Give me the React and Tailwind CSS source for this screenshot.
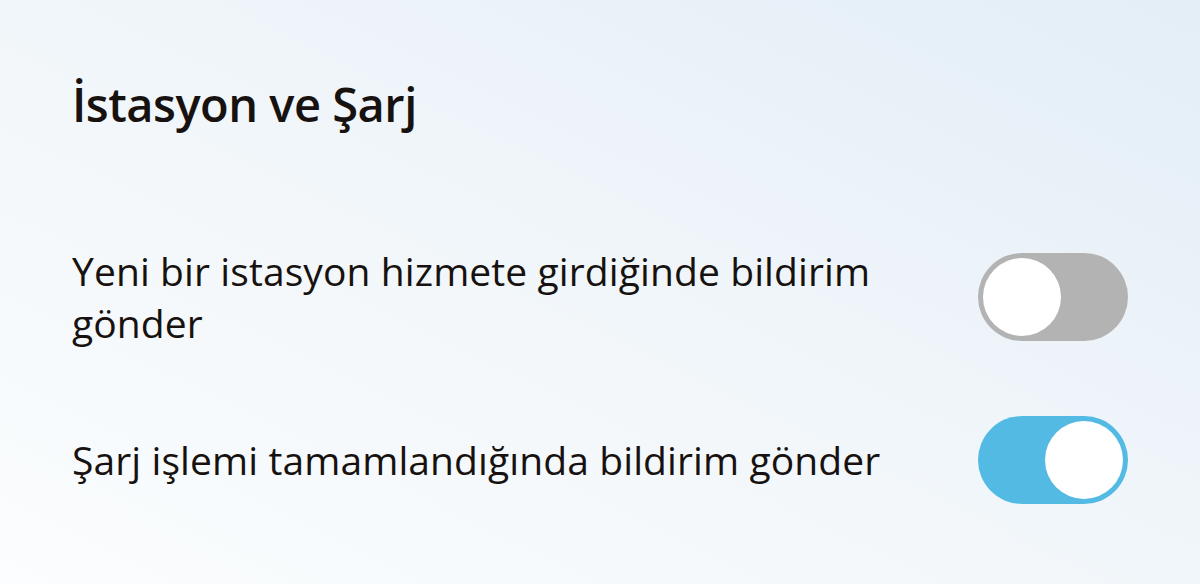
import { useState } from 'react';

// Bildirim ayarları: istasyon ve şarj bölümü
const rows = [
  { id: 'yeni-istasyon', label: 'Yeni bir istasyon hizmete girdiğinde bildirim gönder', on: false },
  { id: 'sarj-tamam', label: 'Şarj işlemi tamamlandığında bildirim gönder', on: true },
];

export default function App() {
  const [state, setState] = useState(() => Object.fromEntries(rows.map((r) => [r.id, r.on])));

  return (
    <div
      className="h-[584px] w-[1200px] overflow-hidden bg-gradient-to-tr from-[#fbfdfe] via-[#f1f6fa] to-[#e3eef7] text-[#17120f]"
      style={{ fontFamily: '"Open Sans", "Noto Sans", sans-serif' }}
    >
      <div className="pl-[72px] pr-[72px]">
        <h2 className="pt-[72px] text-[47px] font-semibold leading-[64px] tracking-[-0.5px]">İstasyon ve Şarj</h2>

        <div className="mt-[109px] flex flex-col gap-[67px]">
          {rows.map((r) => (
            <SettingRow
              key={r.id}
              label={r.label}
              checked={state[r.id]}
              onToggle={() => setState((s) => ({ ...s, [r.id]: !s[r.id] }))}
            />
          ))}
        </div>
      </div>
    </div>
  );
}

function SettingRow({ label, checked, onToggle }) {
  return (
    <div className="flex items-center justify-between gap-10">
      <p className="max-w-[860px] text-[39px] leading-[52px] tracking-[0.1px]">{label}</p>
      <Toggle checked={checked} onToggle={onToggle} />
    </div>
  );
}

function Toggle({ checked, onToggle }) {
  return (
    <button
      onClick={onToggle}
      className={`flex h-[88px] w-[150px] shrink-0 items-center rounded-full p-[5px] transition-colors ${
        checked ? 'justify-end bg-[#52bae3]' : 'justify-start bg-[#b3b3b3]'
      }`}
    >
      <span className="block h-[78px] w-[78px] rounded-full bg-white" />
    </button>
  );
}
